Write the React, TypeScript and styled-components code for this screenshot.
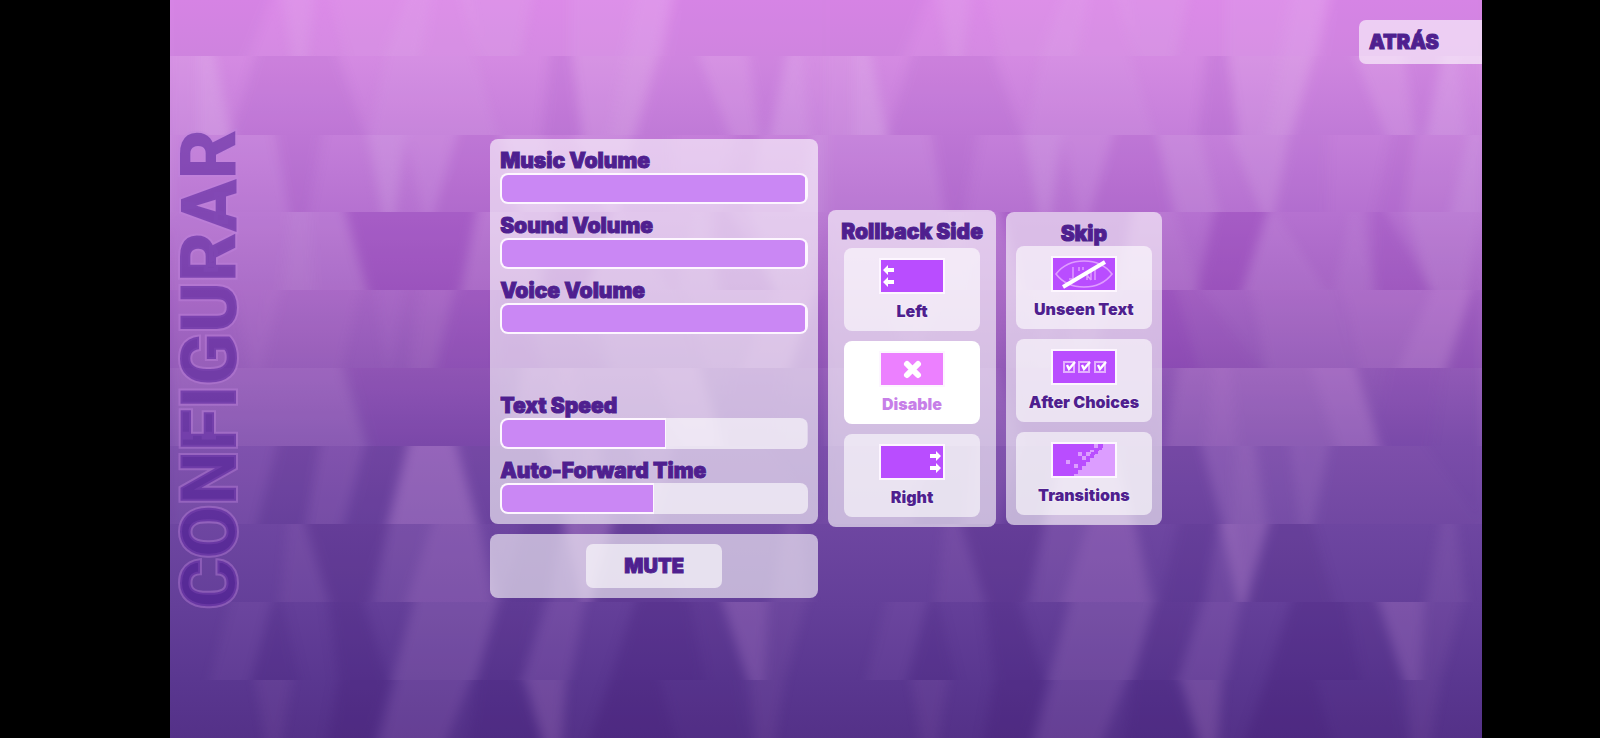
import React, { useState } from 'react';
import styled, { createGlobalStyle } from 'styled-components';

const GlobalStyle = createGlobalStyle`
  *, *::before, *::after { box-sizing: border-box; }
  body {
    margin: 0;
    background: #000;
    color: #4f1f8f;
    font-family: Inter, Roboto, sans-serif;
    font-weight: 900;
  }
  button, input { font: inherit; color: inherit; }
`;

const Page = styled.div`
  display: flex;
  justify-content: center;
  min-height: 100vh;
  padding-left: 52px;
  background: #000;
`;

const Stage = styled.main`
  position: relative;
  isolation: isolate;
  display: grid;
  grid-template-columns: 1fr auto 1fr;
  align-items: center;
  width: min(100%, calc(100vh * 16 / 9));
  background: linear-gradient(
    #dc8ae8 0%, #d48ae2 8%, #c57fda 18%, #b571d0 29%, #a665c4 39%,
    #9159b6 50%, #7b4daa 60%, #6e46a1 71%, #643f99 82%, #5a3790 92%, #543188 100%
  );
`;

const Backdrop = styled.svg`
  position: absolute;
  inset: 0;
  z-index: -1;
  width: 100%;
  height: 100%;
`;

const ScreenTitle = styled.h1`
  justify-self: start;
  margin: 0 0 0 4px;
  writing-mode: vertical-rl;
  transform: rotate(180deg);
  font-family: Roboto, sans-serif;
  font-size: 77px;
  line-height: 72px;
  font-weight: 900;
  color: rgba(72, 20, 146, 0.5);
  -webkit-text-stroke: 4px rgba(192, 132, 222, 0.4);
  paint-order: stroke fill;
`;

const Panels = styled.div`
  display: flex;
  align-items: center;
  gap: 10px;
  padding-bottom: 2px;
`;

const Column = styled.div`
  display: flex;
  flex-direction: column;
  gap: 10px;
  width: 328px;
`;

const Panel = styled.section`
  display: flex;
  flex-direction: column;
  align-items: center;
  padding: 10px;
  border-radius: 8px;
  background: rgba(255, 255, 255, 0.6);
`;

const SliderPanel = styled(Panel)`
  align-items: stretch;
  gap: 10px;
`;

const Field = styled.label<{ $spaced?: boolean }>`
  display: flex;
  flex-direction: column;
  margin-top: ${(p) => (p.$spaced ? 50 : 0)}px;
  font-size: 21px;
  line-height: 24px;
  -webkit-text-stroke: 1px currentColor;
  text-shadow: 0 0 2px #fff;
`;

const Bar = styled.input`
  --level: 100%;
  appearance: none;
  width: 100%;
  height: 31px;
  margin: 0;
  border: 2px solid transparent;
  border-radius: 8px;
  background:
    linear-gradient(#ca87f4, #ca87f4) padding-box 0 0 / calc(var(--level) - 1px) 100% no-repeat,
    linear-gradient(#fdf6ff, #fdf6ff) border-box 0 0 / var(--level) 100% no-repeat,
    linear-gradient(rgba(255, 255, 255, 0.6), rgba(255, 255, 255, 0.6)) border-box 100% 0 / calc(100% - var(--level)) 100% no-repeat;
  cursor: pointer;
  &::-webkit-slider-thumb { appearance: none; width: 1px; height: 31px; opacity: 0; }
  &::-moz-range-thumb { width: 1px; border: 0; opacity: 0; }
`;

const PanelTitle = styled.h2<{ $gap?: boolean }>`
  margin: 0 0 ${(p) => (p.$gap ? 4 : 0)}px;
  padding: 0 3px;
  font-size: 21px;
  line-height: 24px;
  font-weight: 900;
  white-space: nowrap;
  -webkit-text-stroke: 1px currentColor;
  text-shadow: 0 0 2px #fff;
`;

const TextButton = styled.button`
  height: 44px;
  padding: 0 10px;
  border: 0;
  border-radius: 7px;
  background: rgba(255, 255, 255, 0.6);
  font-size: 20px;
  line-height: 24px;
  -webkit-text-stroke: 1px currentColor;
  text-shadow: 0 0 2px #fff;
  cursor: pointer;
`;

const MuteButton = styled(TextButton)`
  width: 136px;
`;

const BackButton = styled(TextButton)`
  align-self: start;
  justify-self: end;
  width: 123px;
  margin-top: 20px;
  border-radius: 7px 0 0 7px;
  text-align: left;
`;

const Choices = styled.div`
  display: flex;
  flex-direction: column;
  gap: 10px;
`;

const ChoiceButton = styled.button`
  display: flex;
  flex-direction: column;
  align-items: center;
  gap: 7px;
  width: 136px;
  padding: 10px 0;
  border: 0;
  border-radius: 8px;
  background: rgba(255, 255, 255, 0.6);
  font-size: 16px;
  line-height: 20px;
  white-space: nowrap;
  text-shadow: 0 0 2px #fff;
  cursor: pointer;

  &[aria-pressed='true'] {
    background: #fff;
    color: #c77fe8;
  }
`;

const Tile = styled.svg<{ $active: boolean }>`
  display: block;
  width: 66px;
  height: 36px;
  border: 2px solid #fdf6ff;
  background: ${(p) => (p.$active ? '#ec80ff' : '#b94dff')};
`;

// Each facet: top-left x, top-right x, bottom-left x, bottom-right x, strength.
// Positive strength lightens the row, negative darkens it.
type Facet = [number, number, number, number, number];
const rows: { y: number; h: number; facets: Facet[] }[] = [
  { y: 0, h: 56, facets: [
    [0, 100, 0, 78, -0.06], [112, 145, 122, 137, 0.14], [160, 300, 175, 310, 0.07], [235, 262, 215, 250, 0.09],
    [292, 362, 310, 350, 0.12], [400, 500, 400, 487, 0.1], [465, 502, 455, 490, 0.1], [505, 656, 495, 656, -0.05] ] },
  { y: 56, h: 79, facets: [
    [0, 45, 0, 62, 0.13], [28, 45, 28, 60, 0.13], [85, 168, 62, 195, -0.09], [215, 305, 200, 328, 0.08],
    [380, 402, 372, 412, -0.1], [402, 487, 412, 464, 0.13], [455, 487, 440, 464, 0.07], [492, 530, 468, 560, -0.05],
    [528, 578, 560, 590, 0.12], [580, 618, 588, 600, -0.05], [616, 632, 600, 640, 0.18], [632, 656, 640, 656, 0.08] ] },
  { y: 135, h: 77, facets: [
    [0, 104, 0, 118, 0.08], [106, 152, 120, 138, -0.09], [198, 236, 212, 225, 0.18], [236, 286, 252, 264, 0.1],
    [288, 330, 265, 345, -0.08], [332, 374, 350, 393, 0.13], [404, 464, 435, 448, 0.15], [462, 502, 452, 500, -0.05],
    [565, 590, 550, 578, -0.07], [590, 640, 578, 622, 0.06], [642, 656, 624, 656, 0.18] ] },
  { y: 212, h: 78, facets: [
    [0, 174, 0, 195, 0.09], [120, 140, 112, 143, 0.05], [176, 306, 198, 290, -0.24], [308, 350, 292, 372, 0.07],
    [388, 442, 372, 416, -0.26], [440, 450, 418, 500, 0.08], [525, 532, 508, 550, 0.08], [545, 560, 548, 604, -0.16],
    [580, 656, 604, 642, 0.13] ] },
  { y: 290, h: 78, facets: [
    [0, 110, 0, 92, 0.08], [64, 104, 80, 90, 0.06], [100, 190, 90, 172, 0.07], [205, 235, 215, 220, 0.06],
    [250, 282, 240, 266, 0.07], [286, 350, 266, 372, -0.14], [328, 375, 328, 435, -0.08], [425, 512, 440, 530, 0.1],
    [515, 602, 532, 576, 0.14], [604, 646, 574, 620, 0.24], [646, 656, 622, 656, -0.1] ] },
  { y: 368, h: 78, facets: [
    [0, 172, 0, 196, 0.16], [180, 328, 200, 338, -0.08], [352, 530, 338, 554, 0.18], [388, 404, 380, 412, 0.07],
    [485, 530, 510, 554, 0.09], [560, 615, 545, 605, -0.06] ] },
  { y: 446, h: 78, facets: [
    [0, 105, 0, 86, 0.06], [108, 150, 88, 136, -0.12], [150, 192, 136, 172, 0.07], [196, 238, 176, 216, -0.14],
    [238, 286, 218, 308, 0.28], [290, 375, 310, 395, -0.08], [376, 430, 396, 442, 0.16], [410, 428, 405, 438, 0.07],
    [430, 470, 442, 475, 0.08], [466, 504, 474, 488, 0.16], [508, 600, 490, 656, 0.03] ] },
  { y: 524, h: 78, facets: [
    [118, 134, 110, 158, 0.07], [136, 220, 160, 198, -0.18], [218, 310, 205, 330, 0.1], [262, 308, 236, 322, 0.12],
    [352, 392, 334, 378, -0.14], [395, 442, 412, 420, 0.24], [392, 410, 380, 420, 0.08], [444, 486, 424, 508, -0.13],
    [615, 630, 600, 640, 0.1] ] },
  { y: 602, h: 78, facets: [
    [60, 100, 40, 80, 0.06], [104, 112, 82, 130, -0.14], [158, 194, 168, 218, -0.22], [244, 328, 222, 306, 0.16],
    [328, 370, 308, 350, -0.1], [378, 415, 352, 400, 0.13], [465, 520, 440, 535, -0.24], [520, 550, 535, 575, -0.1],
    [553, 598, 578, 594, 0.2], [598, 636, 592, 615, 0.07] ] },
  { y: 680, h: 58, facets: [
    [85, 122, 95, 112, 0.07], [168, 220, 158, 204, -0.26], [226, 300, 210, 278, 0.13], [306, 350, 298, 370, -0.22],
    [356, 396, 372, 392, 0.18], [440, 490, 420, 505, -0.28], [490, 570, 505, 580, -0.1], [580, 615, 585, 605, 0.07] ] },
];

function Facets() {
  return (
    <Backdrop viewBox="0 0 1312 738" preserveAspectRatio="none" aria-hidden="true">
      <defs>
        <filter
          id="soften"
          filterUnits="userSpaceOnUse"
          x="-20"
          y="0"
          width="1352"
          height="738"
          colorInterpolationFilters="sRGB"
        >
          <feGaussianBlur stdDeviation="6 0" />
        </filter>
        {rows.map((r) => (
          <clipPath id={`row${r.y}`} key={r.y}>
            <rect x="0" y={r.y} width="1312" height={r.h} />
          </clipPath>
        ))}
      </defs>
      {rows.map((r) => (
        <g key={r.y} clipPath={`url(#row${r.y})`}>
          <g filter="url(#soften)">
            {[-656, 0, 656, 1312].map((dx) =>
              r.facets.map(([a, b, c, d, s], i) => (
                <polygon
                  key={`${dx}-${i}`}
                  points={`${a + dx},${r.y} ${b + dx},${r.y} ${d + dx},${r.y + r.h} ${c + dx},${r.y + r.h}`}
                  fill={s > 0 ? (r.y < 290 ? '#ead0f2' : '#dca6e6') : r.y < 400 ? '#7a1fa8' : '#3c1670'}
                  fillOpacity={Math.abs(s)}
                />
              )),
            )}
          </g>
        </g>
      ))}
    </Backdrop>
  );
}

const arrow = 'M0 5 L5 0 V3 H11 V7 H5 V10 Z';

const drawings: Record<string, React.ReactNode> = {
  Left: (
    <g fill="#fff">
      <path d={arrow} transform="translate(2 5)" />
      <path d={arrow} transform="translate(2 17)" />
    </g>
  ),
  Disable: <path d="M26 11 L37 22 M37 11 L26 22" stroke="#fff" strokeWidth="6" strokeLinecap="round" />,
  Right: (
    <g fill="#fff">
      <path d={arrow} transform="translate(60 5) scale(-1 1)" />
      <path d={arrow} transform="translate(60 17) scale(-1 1)" />
    </g>
  ),
  'Unseen Text': (
    <g fill="none" stroke="#df9cff">
      <path d="M3 16 Q13 3 31 3 Q49 3 59 16 Q49 29 31 29 Q13 29 3 16 Z" strokeWidth="1.6" />
      <path d="M20 9 V21 H16 M26 9 V13 M30 9 V12 M25 18 V22 M34 13 V22 M38 11 V22 M42 12 V22 M34 17 L38 22" strokeWidth="1.5" />
      <path d="M10 29 L52 4" stroke="#fff" strokeWidth="4" />
    </g>
  ),
  'After Choices': (
    <g fill="none">
      {[11, 26, 42].map((x) => (
        <g key={x}>
          <rect x={x} y="11" width="10" height="10" stroke="#e4b0ff" strokeWidth="2" />
          <path d={`M${x + 3} 14 L${x + 5} 18 L${x + 11} 11`} stroke="#fff" strokeWidth="2.4" />
        </g>
      ))}
    </g>
  ),
  Transitions: (
    <g fill="#dc9dff">
      <path d="M50 0 H62 V32 H21 V30 H25 V26 H29 V22 H33 V18 H37 V14 H41 V10 H45 V6 H49 V2 H50 Z" />
      {[[13, 16], [25, 8], [33, 8], [29, 12], [21, 20], [41, 0], [37, 6]].map(([x, y]) => (
        <rect key={`${x}-${y}`} x={x} y={y} width="4" height="4" />
      ))}
      <path d="M46 0 h4 v4 h-4 Z M42 4 h4 v3 h-4 Z M38 8 h4 v3 h-4 Z" fill="#b94dff" />
    </g>
  ),
};

function Choice({ name, active, onPick }: { name: string; active: boolean; onPick: () => void }) {
  return (
    <ChoiceButton type="button" aria-pressed={active} onClick={onPick}>
      <Tile $active={active} viewBox="0 0 62 32" aria-hidden="true">{drawings[name]}</Tile>
      {name}
    </ChoiceButton>
  );
}

function Slider({ name, initial, spaced }: { name: string; initial: number; spaced?: boolean }) {
  const [value, setValue] = useState(initial);
  return (
    <Field $spaced={spaced}>
      {name}
      <Bar
        type="range"
        min={0}
        max={100}
        value={value}
        onChange={(e) => setValue(Number(e.target.value))}
        style={{ '--level': `${value}%` } as React.CSSProperties}
      />
    </Field>
  );
}

export default function App() {
  const [side, setSide] = useState('Disable');
  const [skips, setSkips] = useState<string[]>([]);
  const toggle = (name: string) =>
    setSkips((s) => (s.includes(name) ? s.filter((n) => n !== name) : [...s, name]));

  return (
    <Page>
      <GlobalStyle />
      <Stage>
        <Facets />
        <ScreenTitle>CONFIGURAR</ScreenTitle>
        <Panels>
          <Column>
            <SliderPanel>
              <Slider name="Music Volume" initial={100} />
              <Slider name="Sound Volume" initial={100} />
              <Slider name="Voice Volume" initial={100} />
              <Slider name="Text Speed" initial={54} spaced />
              <Slider name="Auto-Forward Time" initial={50} />
            </SliderPanel>
            <Panel>
              <MuteButton type="button">MUTE</MuteButton>
            </Panel>
          </Column>
          <Panel>
            <PanelTitle $gap>Rollback Side</PanelTitle>
            <Choices>
              {['Left', 'Disable', 'Right'].map((n) => (
                <Choice key={n} name={n} active={side === n} onPick={() => setSide(n)} />
              ))}
            </Choices>
          </Panel>
          <Panel>
            <PanelTitle>Skip</PanelTitle>
            <Choices>
              {['Unseen Text', 'After Choices', 'Transitions'].map((n) => (
                <Choice key={n} name={n} active={skips.includes(n)} onPick={() => toggle(n)} />
              ))}
            </Choices>
          </Panel>
        </Panels>
        <BackButton type="button">ATRÁS</BackButton>
      </Stage>
    </Page>
  );
}
